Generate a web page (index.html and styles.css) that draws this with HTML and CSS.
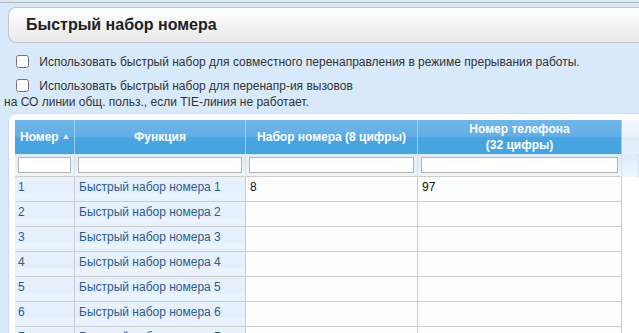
FILE: index.html
```html
<!DOCTYPE html>
<html lang="ru">
<head>
<meta charset="UTF-8">
<meta name="viewport" content="width=device-width, initial-scale=1.0">
<title>Быстрый набор номера</title>
<link rel="stylesheet" href="styles.css">
</head>
<body>
<div class="page">
  <div class="title-bar">Быстрый набор номера</div>

  <div class="options">
    <label class="opt">
      <input type="checkbox">
      Использовать быстрый набор для совместного перенаправления в режиме прерывания работы.
    </label>
    <label class="opt opt2">
      <input type="checkbox">
      Использовать быстрый набор для перенапр-ия вызовов<br>на СО линии общ. польз., если TIE-линия не работает.
    </label>
  </div>

  <div class="panel">
    <table class="grid">
      <tr class="head">
        <th class="c1">Номер <span class="sort"></span></th>
        <th class="c2">Функция</th>
        <th class="c3">Набор номера (8 цифры)</th>
        <th class="c4">Номер телефона<br>(32 цифры)</th>
        <th class="fill"></th>
      </tr>
      <tr class="filter">
        <td><input type="text"></td>
        <td><input type="text"></td>
        <td><input type="text"></td>
        <td><input type="text"></td>
        <td class="fill"></td>
      </tr>
      <tr class="row"><td class="k">1</td><td class="k">Быстрый набор номера 1</td><td>8</td><td>97</td><td class="fill"></td></tr>
      <tr class="row"><td class="k">2</td><td class="k">Быстрый набор номера 2</td><td></td><td></td><td class="fill"></td></tr>
      <tr class="row"><td class="k">3</td><td class="k">Быстрый набор номера 3</td><td></td><td></td><td class="fill"></td></tr>
      <tr class="row"><td class="k">4</td><td class="k">Быстрый набор номера 4</td><td></td><td></td><td class="fill"></td></tr>
      <tr class="row"><td class="k">5</td><td class="k">Быстрый набор номера 5</td><td></td><td></td><td class="fill"></td></tr>
      <tr class="row"><td class="k">6</td><td class="k">Быстрый набор номера 6</td><td></td><td></td><td class="fill"></td></tr>
      <tr class="row"><td class="k">7</td><td class="k">Быстрый набор номера 7</td><td></td><td></td><td class="fill"></td></tr>
    </table>
  </div>
</div>
</body>
</html>
```

FILE: styles.css
```css
html, body {
  margin: 0;
  height: 100%;
  overflow: hidden;
}

body {
  font-family: "Liberation Sans", Arial, sans-serif;
  font-size: 12px;
  color: #333;
  background-color: #d8e9fb;
}

.page {
  margin-top: 2px;
  border-top: 1px solid #b8b8b8;
}

.title-bar {
  margin: 4px 0 0 8px;
  height: 34px;
  line-height: 34px;
  padding-left: 17px;
  border: 1px solid #c4c4c4;
  border-right: none;
  border-radius: 8px 0 0 8px;
  background: linear-gradient(#ffffff, #f3f3f3 50%, #e9e9e9);
  font-size: 16px;
  font-weight: bold;
  color: #222;
}

.options {
  padding: 6px 4px 0 4px;
}

.opt {
  display: block;
  line-height: 16px;
  margin-top: 5px;
}

.opt2 {
  margin-top: 8px;
}

.opt input {
  width: 13px;
  height: 13px;
  margin: 0 7px 0 12px;
  vertical-align: -2px;
}

.panel {
  margin: 3px 0 0 8px;
  padding: 6px 0 0 6px;
  background: #fff;
  border-top: 1px solid #cbd9e8;
  border-left: 1px solid #cbd9e8;
  border-radius: 7px 0 0 0;
}

.grid {
  border-collapse: collapse;
  width: 100%;
  table-layout: fixed;
}

.grid th, .grid td {
  padding: 0;
}

.head th {
  height: 34px;
  color: #fff;
  font-weight: bold;
  text-align: center;
  line-height: 16px;
  border-right: 1px solid #9fcdef;
  background: linear-gradient(#6fb5e8, #62aee6 48%, #49a4e1 52%, #47a3e0);
}

.head th.fill {
  border-right: none;
  border-left: 1px solid #cfdbe6;
  background: linear-gradient(#f3f8fd, #e8f1fb 48%, #dfecf9 52%, #e6f0fa);
}

.c1 { width: 59px; }
.c2 { width: 170px; }
.c3 { width: 171px; }
.c4 { width: 203px; }

.sort {
  display: inline-block;
  width: 0;
  height: 0;
  border-left: 3px solid transparent;
  border-right: 3px solid transparent;
  border-bottom: 5px solid #d9ebf8;
  vertical-align: 2px;
  margin-left: 1px;
}

.filter td {
  height: 22px;
  padding: 0 3px;
  border-right: 1px solid #d2e2f0;
  background: linear-gradient(#dcebf9, #e7f1fb 60%, #eef5fc);
}

.filter td.fill {
  border-left: 1px solid #cfdbe6;
}

.filter input {
  box-sizing: border-box;
  width: 100%;
  height: 16px;
  margin: 0;
  border: 1px solid #b5b5b5;
  background: #fff;
  outline: none;
}

.row td {
  height: 22px;
  vertical-align: top;
  padding: 2px 4px 0 4px;
  line-height: 16px;
  color: #111;
  border: 1px solid #cdcdcd;
  background: #fcfdfd;
}

.row td.k {
  color: #2d5d8f;
  background: linear-gradient(#e6f1fc, #e4effb 60%, #ecf4fd 70%, #e6f1fc);
}

.row td:first-child {
  padding-left: 3px;
  border-left: none;
}

.row td.fill {
  border-top: none;
  border-bottom: none;
  border-right: none;
  background: #fff;
}
```
